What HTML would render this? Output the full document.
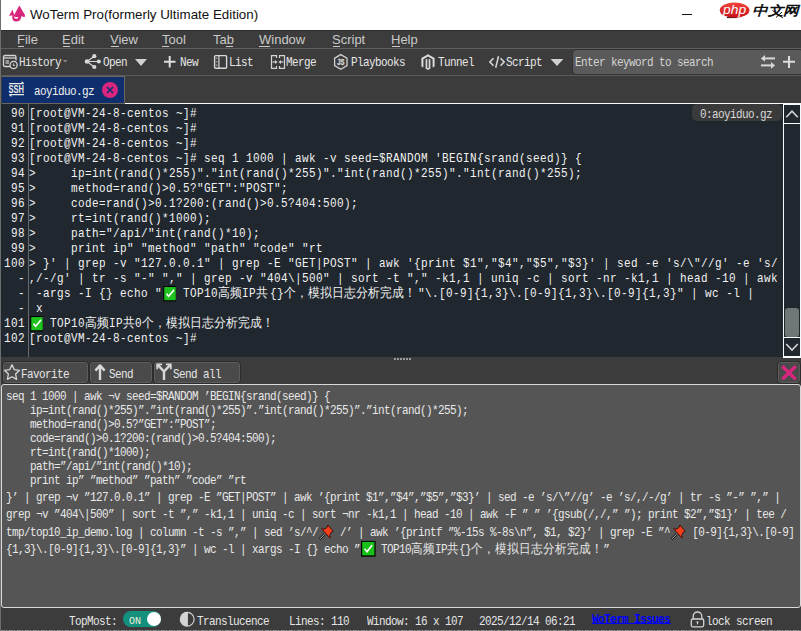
<!DOCTYPE html>
<html><head><meta charset="utf-8">
<style>
*{margin:0;padding:0;box-sizing:border-box}
html,body{width:801px;height:631px;overflow:hidden;background:#3c3c3c;position:relative}
.a{position:absolute}
.ui{font-family:"Liberation Mono",monospace;font-size:11px;letter-spacing:-0.6px;transform:scaleY(1.12);transform-origin:0 9px;color:#e6e6e6;white-space:pre;line-height:12px}
.term{font-family:"Liberation Mono",monospace;font-size:11px;letter-spacing:0.4px;transform:scaleY(1.1);transform-origin:0 10.5px;color:#f2f2f2;white-space:pre;line-height:15px}
.cj{font-size:12px;letter-spacing:0}
.menu{font-family:"Liberation Sans",sans-serif;font-size:13px;color:#c9c9c9;white-space:pre;line-height:16px}
.ul{top:46px;height:1px;background:#c9c9c9}
.ln{left:0;width:25px;text-align:right}
.chk{display:inline-block;position:relative;width:14px;height:15px;vertical-align:top}
.btn{border:1px solid #2c2c2c;border-radius:4px;background:#4a4a4a;box-shadow:inset 0 0 0 1px #5c5c5c}
.ta{font-family:"Liberation Mono",monospace;font-size:11px;letter-spacing:-0.6px;transform:scaleY(1.12);transform-origin:0 10px;color:#e8e8e8;white-space:pre;line-height:14px}
.cj2{font-size:12px;letter-spacing:0}
.em{display:inline-block;position:relative;height:0}
</style></head><body>
<!-- left border -->
<div class="a" style="left:0;top:0;width:1px;height:631px;background:#6e6e6e;z-index:9"></div>
<!-- title bar -->
<div class="a" style="left:1px;top:0;width:800px;height:30px;background:#fff"></div>
<div class="a" style="left:1px;top:30px;width:800px;height:1px;background:#2e2e2e"></div>
<svg class="a" style="left:0;top:0" width="30" height="30" viewBox="0 0 30 30">
<path d="M19.4 5.6 L25.1 15.2 Q25.6 17.2 23.6 16.9 L21.5 15.9 L21 18 Q20.2 21.6 16 21.6 Q12.4 21.5 12.2 17.6 L12.3 15.3 L9 15.9 L12.5 9.6 L14 14.6 L13.7 15.6 Q13.9 18.7 16.3 18.8 Q18.3 18.8 18.4 17.3 L15.2 17.1 Q13.6 17 13.8 15.6 Z" fill="#d9267d"/>
</svg>
<div class="a" style="left:30px;top:7px;font-family:'Liberation Sans',sans-serif;font-size:13.35px;color:#111;white-space:pre">WoTerm Pro(formerly Ultimate Edition)</div>
<div class="a" style="left:682px;top:14px;width:10px;height:1px;background:#111"></div>

<!-- watermark -->
<svg class="a" style="left:715px;top:0" width="86" height="26" viewBox="0 0 86 26">
 <defs><linearGradient id="rg" x1="0" y1="0" x2="0" y2="1"><stop offset="0" stop-color="#f0443a"/><stop offset="1" stop-color="#c8101a"/></linearGradient></defs>
 <path d="M12 17.6 H22" stroke="#111" stroke-width="1"/>
 <ellipse cx="19.6" cy="10.2" rx="14.8" ry="7.6" fill="url(#rg)"/>
 <text x="19.6" y="13.8" text-anchor="middle" font-family="Liberation Sans" font-style="italic" font-size="12.5" fill="#fff" textLength="23" lengthAdjust="spacingAndGlyphs">php</text>
 <text x="37" y="14.6" font-family="Liberation Sans" font-style="italic" font-weight="bold" font-size="13" fill="#111" textLength="47" lengthAdjust="spacingAndGlyphs">中文网</text>
 <path d="M57.5 10.5 L68 18 M61 17.5 L67 12" stroke="#111" stroke-width="1"/>
</svg>
<!-- menu -->
<div class="a menu" style="left:17px;top:32px">File</div>
<div class="a menu" style="left:62px;top:32px">Edit</div>
<div class="a menu" style="left:110px;top:32px">View</div>
<div class="a menu" style="left:162px;top:32px">Tool</div>
<div class="a menu" style="left:213px;top:32px">Tab</div>
<div class="a menu" style="left:259px;top:32px">Window</div>
<div class="a menu" style="left:332px;top:32px">Script</div>
<div class="a menu" style="left:391px;top:32px">Help</div>
<div class="a ul" style="left:18px;width:6px"></div>
<div class="a ul" style="left:63px;width:7px"></div>
<div class="a ul" style="left:111px;width:8px"></div>
<div class="a ul" style="left:162px;width:7px"></div>
<div class="a ul" style="left:226px;width:7px"></div>
<div class="a ul" style="left:259px;width:11px"></div>
<div class="a ul" style="left:333px;width:7px"></div>
<div class="a ul" style="left:392px;width:8px"></div>
<div class="a" style="left:1px;top:48px;width:800px;height:1px;background:#5e5e5e"></div>

<!-- toolbar -->
<svg class="a" style="left:0;top:50px" width="801" height="24" viewBox="0 50 801 24" fill="none" stroke="#d4d4d4" stroke-width="1.3">
 <!-- history -->
 <path d="M10 66.5 H5 Q3.5 66.5 3.5 65 V57 Q3.5 55.5 5 55.5 H14.5 Q16 55.5 16 57 V60.5"/>
 <line x1="3.5" y1="58" x2="16" y2="58"/>
 <rect x="5.5" y="60" width="3.5" height="4" fill="#9a9a9a" stroke="none"/>
 <circle cx="13.6" cy="65" r="3.6"/>
 <path d="M13.3 63.4 V65.4 H15" stroke-width="1"/>
 <!-- share -->
 <g fill="#d8d8d8" stroke="none">
 <circle cx="87" cy="61.5" r="2.3"/><circle cx="94.3" cy="56.2" r="2.1"/><circle cx="98.8" cy="61.5" r="2.1"/><circle cx="94.3" cy="67" r="2.1"/>
 </g>
 <path d="M87 61.5 L94.3 56.2 M87 61.5 H98.8 M87 61.5 L94.3 67" stroke="#d8d8d8" stroke-width="1.1"/>
 <!-- new plus -->
 <path d="M169.7 56 V67.5 M164 61.8 H175.5" stroke="#dcdcdc" stroke-width="2"/>
 <!-- list -->
 <rect x="214.6" y="55.6" width="12" height="12.6" rx="1" stroke="#d8d8d8" stroke-width="1.4"/>
 <line x1="218.9" y1="56" x2="218.9" y2="68" stroke="#d8d8d8" stroke-width="1.2"/>
 <path d="M216.8 57.5 V59 M216.8 61 V62.5 M216.8 64.5 V66" stroke="#bdbdbd" stroke-width="1"/>
 <!-- merge -->
 <path d="M276.5 58 V55.6 H271.5 V68.4 H276.5 V66" stroke="#d4d4d4" stroke-width="1.2"/>
 <path d="M279.5 58 V55.6 H284.5 V68.4 H279.5 V66" stroke="#d4d4d4" stroke-width="1.2"/>
 <path d="M272.5 62 H276" stroke="#d4d4d4" stroke-width="1.2"/>
 <path d="M283.5 62 H280" stroke="#d4d4d4" stroke-width="1.2"/>
 <path d="M275 60 L277.5 62 L275 64 Z M281 60 L278.5 62 L281 64 Z" fill="#d4d4d4" stroke="none"/>
 <!-- js hex -->
 <path d="M340.8 54.6 L347 58.2 V65.6 L340.8 69.2 L334.6 65.6 V58.2 Z" stroke="#cfcfcf" stroke-width="1.3"/>
 <text x="337.3" y="65.4" textLength="7.2" lengthAdjust="spacingAndGlyphs" font-family="Liberation Sans" font-size="8.4" font-weight="bold" fill="#d8d8d8" stroke="#d8d8d8" stroke-width="0.35">JS</text>
 <!-- tunnel magento -->
 <path d="M428 54.2 L434.6 58 V66.6 L432.6 67.6 V59.2 L428 56.6 L423.4 59.2 V67.6 L421.4 66.6 V58 Z" fill="#dadada" stroke="none"/>
 <path d="M425.6 59.6 L427.3 58.7 V67.8 L428 68.2 L428.7 67.8 V58.7 L430.4 59.6 V68.6 L428 70 L425.6 68.6 Z" fill="#dadada" stroke="none"/>
 <!-- script -->
 <path d="M493.5 58.3 L489.9 62 L493.5 65.7 M500.5 58.3 L504.1 62 L500.5 65.7" stroke="#d8d8d8" stroke-width="1.6"/>
 <path d="M498.5 56.3 L495.7 67.8" stroke="#d8d8d8" stroke-width="1.5"/>
 <!-- triangles -->
 <path d="M135 59 H147 L141 66 Z M550.6 59 H563.4 L557 66 Z" fill="#d0d0d0" stroke="none"/>
 <path d="M63 60 H67.6 L65.3 62.5 Z" fill="#8a8a8a" stroke="none"/>
</svg>
<div class="a ui" style="left:19px;top:57px">History</div>
<div class="a ui" style="left:103px;top:57px">Open</div>
<div class="a ui" style="left:180px;top:57px">New</div>
<div class="a ui" style="left:229px;top:57px">List</div>
<div class="a ui" style="left:286px;top:57px">Merge</div>
<div class="a ui" style="left:351px;top:57px">Playbooks</div>
<div class="a ui" style="left:438px;top:57px">Tunnel</div>
<div class="a ui" style="left:506px;top:57px">Script</div>
<!-- search -->
<div class="a" style="left:572px;top:49px;width:232px;height:26px;border-radius:5px;background:#323232"></div>
<div class="a" style="left:573px;top:50px;width:230px;height:24px;border-radius:4px;background:#5a5a5a"></div>
<div class="a ui" style="left:575px;top:57px;color:#d4d4d4">Enter keyword to search</div>
<svg class="a" style="left:752px;top:48px" width="49" height="28" viewBox="0 0 49 28">
 <path d="M23 10.4 H11" stroke="#d8d8d8" stroke-width="2"/>
 <path d="M8.9 10.4 L13 7 V13.8 Z" fill="#d8d8d8"/>
 <path d="M9 17.4 H21" stroke="#d8d8d8" stroke-width="2"/>
 <path d="M23.1 17.4 L19 14 V20.8 Z" fill="#d8d8d8"/>
 <path d="M37 8 V20 M31 13.8 H43" stroke="#dcdcdc" stroke-width="2"/>
</svg>
<div class="a" style="left:1px;top:75px;width:800px;height:1px;background:#5a5a5a"></div>

<!-- tab -->
<div class="a" style="left:2px;top:76px;width:123px;height:28px;background:#6a665e"></div>
<div class="a" style="left:2px;top:77px;width:122px;height:26px;background:#0e2e6e"></div>
<svg class="a" style="left:8px;top:80px" width="18" height="18" viewBox="0 0 18 18">
 <path d="M1 3.6 H15.5 M13.5 1.8 L15.8 3.6" stroke="#e8e8e8" stroke-width="1.2" fill="none"/>
 <path d="M16 14.6 H1.5 M3.5 16.4 L1.2 14.6" stroke="#e8e8e8" stroke-width="1.2" fill="none"/>
 <text x="0.6" y="12.6" textLength="15.4" lengthAdjust="spacingAndGlyphs" font-family="Liberation Sans" font-weight="bold" font-size="10.8" fill="#e8e8e8">SSH</text>
</svg>
<div class="a ui" style="left:34px;top:86px;color:#f0f0f0">aoyiduo.gz</div>
<svg class="a" style="left:101px;top:81px" width="18" height="18" viewBox="0 0 18 18">
 <circle cx="9" cy="9" r="8" fill="#d8267f"/>
 <path d="M6 6 L12 12 M12 6 L6 12" stroke="#0e2e6e" stroke-width="1.6"/>
</svg>
<div class="a" style="left:125px;top:103px;width:676px;height:1px;background:#f4fbff"></div>
<!-- terminal -->
<div class="a" style="left:1px;top:104px;width:782px;height:253px;background:#20272e"></div>
<div class="a" style="left:28px;top:104px;width:1px;height:253px;background:#6b6b6b"></div>
<!-- term rows -->
<div class="a term ln" style="top:107px">90</div>
<div class="a term" style="left:29px;top:107px">[root@VM-24-8-centos ~]#</div>
<div class="a term ln" style="top:122px">91</div>
<div class="a term" style="left:29px;top:122px">[root@VM-24-8-centos ~]#</div>
<div class="a term ln" style="top:137px">92</div>
<div class="a term" style="left:29px;top:137px">[root@VM-24-8-centos ~]#</div>
<div class="a term ln" style="top:152px">93</div>
<div class="a term" style="left:29px;top:152px">[root@VM-24-8-centos ~]# seq 1 1000 | awk -v seed=$RANDOM 'BEGIN{srand(seed)} {</div>
<div class="a term ln" style="top:167px">94</div>
<div class="a term" style="left:29px;top:167px">&gt;     ip=int(rand()*255)"."int(rand()*255)"."int(rand()*255)"."int(rand()*255);</div>
<div class="a term ln" style="top:182px">95</div>
<div class="a term" style="left:29px;top:182px">&gt;     method=rand()&gt;0.5?"GET":"POST";</div>
<div class="a term ln" style="top:197px">96</div>
<div class="a term" style="left:29px;top:197px">&gt;     code=rand()&gt;0.1?200:(rand()&gt;0.5?404:500);</div>
<div class="a term ln" style="top:212px">97</div>
<div class="a term" style="left:29px;top:212px">&gt;     rt=int(rand()*1000);</div>
<div class="a term ln" style="top:227px">98</div>
<div class="a term" style="left:29px;top:227px">&gt;     path="/api/"int(rand()*10);</div>
<div class="a term ln" style="top:242px">99</div>
<div class="a term" style="left:29px;top:242px">&gt;     print ip" "method" "path" "code" "rt</div>
<div class="a term ln" style="top:257px">100</div>
<div class="a term" style="left:29px;top:257px">&gt; }' | grep -v "127.0.0.1" | grep -E "GET|POST" | awk '{print $1","$4","$5","$3}' | sed -e 's/\"//g' -e 's/</div>
<div class="a term ln" style="top:272px">-</div>
<div class="a term" style="left:29px;top:272px">,/-/g' | tr -s "-" "," | grep -v "404\|500" | sort -t "," -k1,1 | uniq -c | sort -nr -k1,1 | head -10 | awk</div>
<div class="a term ln" style="top:287px">-</div>
<div class="a term" style="left:29px;top:287px"> -args -I {} echo "<span class="chk"><svg width="14" height="15" viewBox="0 0 14 15" style="position:absolute;left:0;top:0"><rect x="1.75" y="0.5" width="12.5" height="13" fill="#1ec31e" stroke="#000" stroke-width="1"/><path d="M4.5 7 L6.6 9.4 L12 3.6" stroke="#fff" stroke-width="1.5" fill="none"/></svg></span> TOP10<span class="cj">高频</span>IP<span class="cj" style="margin-right:2px">共</span>{}<span class="cj">个，模拟日志分析完成</span><span class="cj" style="margin-right:2px">！</span>"\.[0-9]{1,3}\.[0-9]{1,3}\.[0-9]{1,3}" | wc -l |</div>
<div class="a term ln" style="top:302px">-</div>
<div class="a term" style="left:29px;top:302px"> x</div>
<div class="a term ln" style="top:317px">101</div>
<div class="a term" style="left:29px;top:317px"><span class="chk"><svg width="14" height="15" viewBox="0 0 14 15" style="position:absolute;left:0;top:0"><rect x="1.75" y="0.5" width="12.5" height="13" fill="#1ec31e" stroke="#000" stroke-width="1"/><path d="M4.5 7 L6.6 9.4 L12 3.6" stroke="#fff" stroke-width="1.5" fill="none"/></svg></span> TOP10<span class="cj">高频</span>IP<span class="cj">共</span>0<span class="cj">个，模拟日志分析完成！</span></div>
<div class="a term ln" style="top:332px">102</div>
<div class="a term" style="left:29px;top:332px">[root@VM-24-8-centos ~]#</div>

<!-- scrollbar -->
<div class="a" style="left:783px;top:103px;width:18px;height:255px;background:#f4fbff"></div>
<div class="a" style="left:784px;top:105px;width:16px;height:18px;background:#20272e"></div>
<div class="a" style="left:784px;top:124px;width:16px;height:213px;background:#20272e"></div>
<div class="a" style="left:785px;top:308px;width:14px;height:29px;border-radius:3px;background:#6f7876"></div>
<div class="a" style="left:784px;top:338px;width:16px;height:18px;background:#20272e"></div>
<svg class="a" style="left:783px;top:103px" width="18" height="255" viewBox="0 0 18 255" fill="none" stroke="#d2d2d2" stroke-width="1.6">
 <path d="M3.2 14.2 L9 8.2 L14.8 14.2"/>
 <path d="M3.2 241 L9 247 L14.8 241"/>
</svg>
<!-- label -->
<div class="a" style="left:692px;top:104px;width:90px;height:17px;border-radius:5px;background:#3a3a3a"></div>
<div class="a ui" style="left:700px;top:109px;color:#d8d8d8">0:aoyiduo.gz</div>
<!-- splitter dots -->
<div class="a" style="left:394px;top:358px;width:17px;height:2px;background:repeating-linear-gradient(90deg,#9a9a9a 0 2px,transparent 2px 3px)"></div>
<!-- bottom toolbar -->
<div class="a btn" style="left:2px;top:361px;width:87px;height:23px"></div>
<div class="a btn" style="left:89px;top:361px;width:64px;height:23px"></div>
<div class="a btn" style="left:153px;top:361px;width:88px;height:23px"></div>
<div class="a btn" style="left:777px;top:361px;width:24px;height:23px"></div>
<svg class="a" style="left:0;top:356px" width="801" height="30" viewBox="0 356 801 30" fill="none" stroke="#d8d8d8">
 <path d="M12 364.8 L14.2 369.6 L19.6 370.3 L15.6 374 L16.6 379.4 L12 376.8 L7.4 379.4 L8.4 374 L4.4 370.3 L9.8 369.6 Z" stroke-width="1.3" stroke-linejoin="round"/>
 <path d="M100 380 V366.5 M95.4 370.6 L100 365.4 L104.6 370.6" stroke-width="2.4" stroke-linejoin="round"/>
 <path d="M164 380 V371.5 L158 365.2 M164 371.5 L170 365.2" stroke-width="2.4" stroke-linejoin="round"/>
 <path d="M157.2 369.2 V364.4 H162 M170.8 369.2 V364.4 H166" stroke-width="1.8"/>
 <path d="M782.3 366.3 L795.7 379.2 M795.7 366.3 L782.3 379.2" stroke="#d8267f" stroke-width="3.4"/>
</svg>
<div class="a ui" style="left:21px;top:369px">Favorite</div>
<div class="a ui" style="left:109px;top:369px">Send</div>
<div class="a ui" style="left:173px;top:369px">Send all</div>
<!-- text area -->
<div class="a" style="left:1px;top:384px;width:800px;height:224px;border:1px solid #d9d9d9;border-right-width:1px;border-radius:3px;background:#555555"></div>
<!-- ta rows -->
<div class="a ta" style="left:6px;top:389.5px">seq 1 1000 | awk ¬v seed=$RANDOM ’BEGIN{srand(seed)} {</div>
<div class="a ta" style="left:6px;top:403.5px">    ip=int(rand()*255)”.”int(rand()*255)”.”int(rand()*255)”.”int(rand()*255);</div>
<div class="a ta" style="left:6px;top:417.5px">    method=rand()&gt;0.5?”GET”:”POST”;</div>
<div class="a ta" style="left:6px;top:431.5px">    code=rand()&gt;0.1?200:(rand()&gt;0.5?404:500);</div>
<div class="a ta" style="left:6px;top:445.5px">    rt=int(rand()*1000);</div>
<div class="a ta" style="left:6px;top:459.5px">    path=”/api/”int(rand()*10);</div>
<div class="a ta" style="left:6px;top:473.5px">    print ip” ”method” ”path” ”code” ”rt</div>
<div class="a ta" style="left:6px;top:491px">}’ | grep ¬v ”127.0.0.1” | grep -E ”GET|POST” | awk ’{print $1”,”$4”,”$5”,”$3}’ | sed -e ’s/\”//g’ -e ’s/,/-/g’ | tr -s ”-” ”,” |</div>
<div class="a ta" style="left:6px;top:508.29999999999995px">grep ¬v ”404\|500” | sort -t ”,” -k1,1 | uniq -c | sort ¬nr -k1,1 | head -10 | awk -F ” ” ’{gsub(/,/,” ”); print $2”,”$1}’ | tee /</div>
<div class="a ta" style="left:6px;top:525.7px">tmp/top10_ip_demo.log | column -t -s ”,” | sed ’s/^/<span class="em" style="width:16px"><svg width="18" height="15" viewBox="0 0 18 15" style="position:absolute;left:0;top:-11px"><path d="M6.5 9.5 L1.8 13.8" stroke="#111" stroke-width="2.2"/><path d="M6.5 9.5 L2 13.5" stroke="#ddd" stroke-width="0.8"/><path d="M9.8 1.2 L15.2 6.6 L13.2 7.6 L11.6 10.6 L12.6 12.2 L11.6 12.6 L4 5 L4.4 4 L6 5 L9 3.4 Z" fill="#f0401c" stroke="#300" stroke-width="0.8"/></svg></span> /’ | awk ’{printf ”%-15s %-8s\n”, $1, $2}’ | grep -E ”^<span class="em" style="width:16px"><svg width="18" height="15" viewBox="0 0 18 15" style="position:absolute;left:0;top:-11px"><path d="M6.5 9.5 L1.8 13.8" stroke="#111" stroke-width="2.2"/><path d="M6.5 9.5 L2 13.5" stroke="#ddd" stroke-width="0.8"/><path d="M9.8 1.2 L15.2 6.6 L13.2 7.6 L11.6 10.6 L12.6 12.2 L11.6 12.6 L4 5 L4.4 4 L6 5 L9 3.4 Z" fill="#f0401c" stroke="#300" stroke-width="0.8"/></svg></span> [0-9]{1,3}\.[0-9]</div>
<div class="a ta" style="left:6px;top:543px">{1,3}\.[0-9]{1,3}\.[0-9]{1,3}” | wc -l | xargs -I {} echo ”<span class="em" style="width:15px"><svg width="16" height="15" viewBox="0 0 16 15" style="position:absolute;left:0;top:-11px"><rect x="1.6" y="0.5" width="13.4" height="13.2" fill="#18c018" stroke="#000" stroke-width="1.2"/><path d="M4.6 7.2 L7 9.8 L12.2 4" stroke="#fff" stroke-width="1.5" fill="none"/></svg></span> TOP10<span class="cj2">高频</span>IP<span class="cj2">共</span>{}<span class="cj2">个，模拟日志分析完成！</span>”</div>
<!-- status bar -->
<div class="a ui" style="left:69px;top:616px">TopMost:</div>
<div class="a" style="left:123px;top:611px;width:38px;height:16px;border-radius:8px;background:#14907f"></div>
<div class="a" style="left:146.5px;top:611.8px;width:14.5px;height:14.5px;border-radius:50%;background:#fff"></div>
<div class="a ui" style="left:129px;top:616px;color:#f4f0d8;font-size:10px;letter-spacing:-0.1px">ON</div>
<svg class="a" style="left:179px;top:611px" width="17" height="17" viewBox="0 0 17 17">
 <circle cx="8.2" cy="8.2" r="6.9" fill="none" stroke="#d4d4d4" stroke-width="1.2"/>
 <path d="M8.2 1.3 A6.9 6.9 0 0 0 8.2 15.1 Z" fill="#d4d4d4"/>
 <line x1="8.2" y1="1.3" x2="8.2" y2="15.1" stroke="#d4d4d4" stroke-width="1.4"/>
</svg>
<div class="a ui" style="left:197px;top:616px">Translucence</div>
<div class="a ui" style="left:289px;top:616px">Lines: 110</div>
<div class="a ui" style="left:367px;top:616px">Window: 16 x 107</div>
<div class="a ui" style="left:479px;top:616px">2025/12/14 06:21</div>
<div class="a ui" style="left:592px;top:614px;color:#0000ff;font-weight:bold">WoTerm Issues</div>
<div class="a" style="left:592px;top:623px;width:79px;height:1px;background:#0000ff"></div>
<svg class="a" style="left:689px;top:611px" width="17" height="17" viewBox="0 0 17 17" fill="none" stroke="#d4d4d4" stroke-width="1.3">
 <path d="M4.2 8 V5.3 A4.3 4.3 0 0 1 12.8 5.3 V8"/>
 <rect x="2.3" y="8" width="12.4" height="7.8" rx="1.5"/>
 <circle cx="8.5" cy="11.3" r="1" fill="#d4d4d4" stroke="none"/>
 <path d="M8.5 11.8 V13.4" stroke-width="1"/>
</svg>
<div class="a ui" style="left:706px;top:616px">lock screen</div>
<div class="a" style="left:1px;top:630px;width:800px;height:1px;background:repeating-linear-gradient(90deg,#8c8c8c 0 4px,#5c6478 4px 5px,#a09482 5px 6px,#6a6a6a 6px 8px)"></div>
</body></html>
